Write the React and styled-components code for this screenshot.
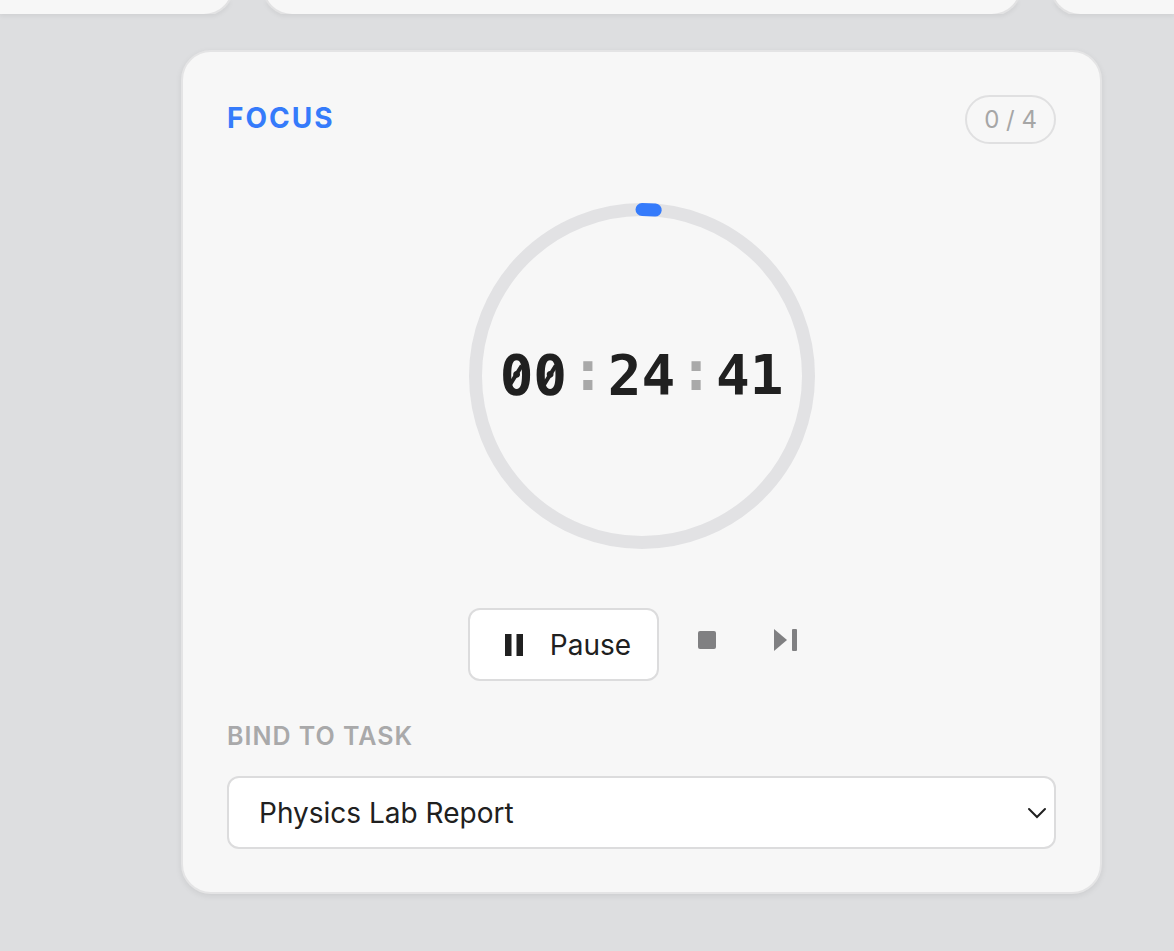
import { useState } from 'react'
import styled, { createGlobalStyle } from 'styled-components'

const GlobalStyle = createGlobalStyle`
  * {
    box-sizing: border-box;
  }
  body {
    margin: 0;
    background: #dddee0;
    color: #202020;
    font-family: Inter, 'Liberation Sans', sans-serif;
  }
  button,
  select {
    font: inherit;
    color: inherit;
  }
`
const Page = styled.main`
  min-height: 100vh;
`
const TopRow = styled.div`
  display: grid;
  grid-template-columns: 234px minmax(0, 1fr) 124px;
  gap: 28px;
`
const TopCard = styled.div`
  height: 14px;
  overflow: hidden;
  filter: drop-shadow(0 2px 2px rgba(0, 0, 0, 0.06));
  &::before {
    content: '';
    display: block;
    height: 80px;
    margin-top: -66px;
    background: #f7f7f7;
    border: 2px solid #e2e2e3;
    border-width: ${({ $side }) =>
      $side === 'left' ? '0 2px 2px 0' : $side === 'right' ? '0 0 2px 2px' : '0 2px 2px'};
    border-radius: ${({ $side }) =>
      $side === 'left' ? '0 0 30px 0' : $side === 'right' ? '0 0 0 30px' : '0 0 30px 30px'};
  }
`
const FocusCard = styled.section`
  margin: 36px 72px 0 181px;
  padding: 43px 44px;
  background: #f7f7f7;
  border: 2px solid #e4e4e5;
  border-radius: 30px;
  box-shadow: 0 2px 6px rgba(0, 0, 0, 0.08);
`
const Header = styled.header`
  display: flex;
  align-items: flex-start;
  justify-content: space-between;
`
const Title = styled.h2`
  margin: 0;
  color: #357bfb;
  font-size: 28px;
  font-weight: 700;
  line-height: 46px;
  letter-spacing: 2px;
`
const Sessions = styled.span`
  padding: 0 17px;
  border: 2px solid #e0e0e1;
  border-radius: 25px;
  color: #a6a6a6;
  font-size: 24px;
  line-height: 45px;
`
const Dial = styled.div`
  display: grid;
  place-items: center;
  margin-top: 56px;
  > * {
    grid-area: 1 / 1;
  }
`
const Ring = styled.svg`
  display: block;
  width: 352px;
  height: 352px;
  fill: none;
  stroke-width: 13;
`
const Clock = styled.div`
  display: flex;
  align-items: center;
  padding-bottom: 2px;
  font-family: 'DejaVu Sans Mono', monospace;
  font-size: 56px;
  font-weight: 700;
  line-height: 64px;
`
const Colon = styled.span`
  padding: 0 3px 8px 4px;
  color: #a9a9a9;
`
// stroke across the counter of the zero
const Zero = styled.span`
  position: relative;
  &::after {
    content: '';
    position: absolute;
    top: 50%;
    left: 50%;
    width: 4px;
    height: 22px;
    background: currentColor;
    transform: translate(-50%, -50%) rotate(32deg);
  }
`
const Controls = styled.div`
  display: flex;
  align-items: flex-start;
  justify-content: center;
  gap: 18px;
  margin-top: 56px;
`
const PauseButton = styled.button`
  display: flex;
  align-items: center;
  gap: 24px;
  height: 73px;
  padding: 0 26px 0 32px;
  background: #fff;
  border: 2px solid #dcdcdd;
  border-radius: 12px;
  font-size: 28px;
  cursor: pointer;
`
const IconButton = styled.button`
  display: grid;
  place-items: center;
  width: 60px;
  height: 64px;
  padding: 0;
  background: none;
  border: 0;
  color: #808082;
  cursor: pointer;
`
const Icon = styled.svg`
  display: block;
  width: 24px;
  height: 24px;
  fill: currentColor;
`
const Label = styled.label`
  display: block;
  margin: 39px 0 24px;
  color: #a9a9aa;
  font-size: 25px;
  font-weight: 600;
  line-height: 32px;
  letter-spacing: 1px;
`
const SelectWrapper = styled.div`
  position: relative;
`
const Select = styled.select`
  display: block;
  width: 100%;
  height: 73px;
  padding: 0 60px 0 30px;
  appearance: none;
  background: #fff;
  border: 2px solid #dcdcdd;
  border-radius: 12px;
  font-size: 28px;
`
const Chevron = styled.svg`
  position: absolute;
  top: 50%;
  right: 9px;
  width: 20px;
  height: 12px;
  transform: translateY(-50%);
  fill: none;
  stroke: #202020;
  stroke-width: 2;
  pointer-events: none;
`

const tasks = ['Physics Lab Report']
const RADIUS = 166.5
const TOTAL = 25 * 60
const REMAINING = 24 * 60 + 41

function Digits({ value }) {
  return (
    <span>
      {[...value].map((digit, i) =>
        digit === '0' ? <Zero key={i}>0</Zero> : digit
      )}
    </span>
  )
}

function Timer() {
  const length = 2 * Math.PI * RADIUS
  const done = length * (1 - REMAINING / TOTAL)

  return (
    <Dial>
      <Ring viewBox="0 0 352 352" aria-hidden="true">
        <circle cx="176" cy="176" r={RADIUS} stroke="#e2e2e4" />
        <circle
          cx="176"
          cy="176"
          r={RADIUS}
          stroke="#357bfb"
          strokeLinecap="round"
          strokeDasharray={`${done} ${length}`}
          transform="rotate(-90 176 176)"
        />
      </Ring>
      <Clock role="timer">
        <Digits value="00" />
        <Colon>:</Colon>
        <Digits value="24" />
        <Colon>:</Colon>
        <Digits value="41" />
      </Clock>
    </Dial>
  )
}

function App() {
  const [task, setTask] = useState(tasks[0])

  return (
    <>
      <GlobalStyle />
      <Page>
        <TopRow>
          <TopCard $side="left" />
          <TopCard />
          <TopCard $side="right" />
        </TopRow>
        <FocusCard>
          <Header>
            <Title>FOCUS</Title>
            <Sessions>0 / 4</Sessions>
          </Header>
          <Timer />
          <Controls>
            <PauseButton type="button">
              <Icon viewBox="0 0 24 24" aria-hidden="true">
                <path d="M3 1h6.500v22h-6.500zM14.500 1h6.500v22h-6.500z" />
              </Icon>
              Pause
            </PauseButton>
            <IconButton type="button" aria-label="Stop">
              <Icon viewBox="0 0 24 24">
                <rect x="3" y="3" width="18" height="18" rx="2" />
              </Icon>
            </IconButton>
            <IconButton type="button" aria-label="Skip">
              <Icon viewBox="0 0 24 24">
                <path d="M1 1l13 11-13 11z" />
                <rect x="19" y="1" width="5" height="22" rx="1" />
              </Icon>
            </IconButton>
          </Controls>
          <Label htmlFor="task">BIND TO TASK</Label>
          <SelectWrapper>
            <Select
              id="task"
              value={task}
              onChange={(e) => setTask(e.target.value)}
            >
              {tasks.map((name) => (
                <option key={name}>{name}</option>
              ))}
            </Select>
            <Chevron viewBox="0 0 20 12" aria-hidden="true">
              <path d="M2 2l8 8 8-8" strokeLinecap="round" />
            </Chevron>
          </SelectWrapper>
        </FocusCard>
      </Page>
    </>
  )
}

export default App
